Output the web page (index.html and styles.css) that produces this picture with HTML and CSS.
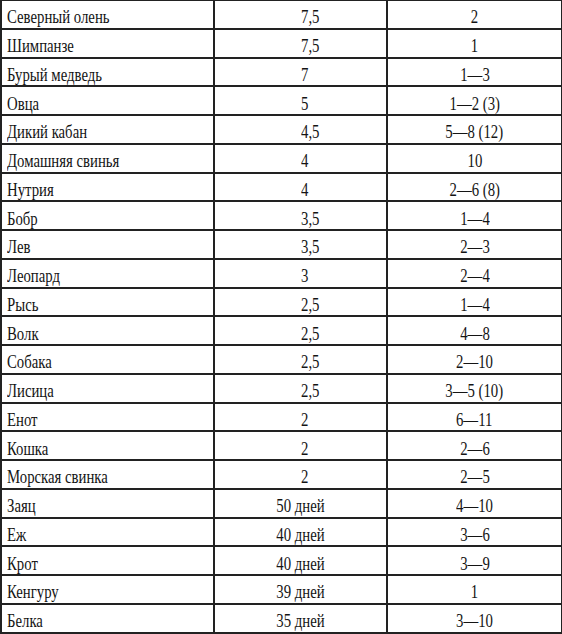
FILE: index.html
```html
<!DOCTYPE html>
<html lang="ru">
<head>
<meta charset="utf-8">
<link rel="stylesheet" href="styles.css">
</head>
<body>
<table class="data">
<colgroup><col class="c1"><col class="c2"><col class="c3"></colgroup>
<tbody>
<tr><td><span>Северный олень</span></td><td class="num"><span>7,5</span></td><td class="ctr"><span>2</span></td></tr>
<tr><td><span>Шимпанзе</span></td><td class="num"><span>7,5</span></td><td class="ctr"><span>1</span></td></tr>
<tr><td><span>Бурый медведь</span></td><td class="num"><span>7</span></td><td class="ctr"><span>1—3</span></td></tr>
<tr><td><span>Овца</span></td><td class="num"><span>5</span></td><td class="ctr"><span>1—2 (3)</span></td></tr>
<tr><td><span>Дикий кабан</span></td><td class="num"><span>4,5</span></td><td class="ctr"><span>5—8 (12)</span></td></tr>
<tr><td><span>Домашняя свинья</span></td><td class="num"><span>4</span></td><td class="ctr"><span>10</span></td></tr>
<tr><td><span>Нутрия</span></td><td class="num"><span>4</span></td><td class="ctr"><span>2—6 (8)</span></td></tr>
<tr><td><span>Бобр</span></td><td class="num"><span>3,5</span></td><td class="ctr"><span>1—4</span></td></tr>
<tr><td><span>Лев</span></td><td class="num"><span>3,5</span></td><td class="ctr"><span>2—3</span></td></tr>
<tr><td><span>Леопард</span></td><td class="num"><span>3</span></td><td class="ctr"><span>2—4</span></td></tr>
<tr><td><span>Рысь</span></td><td class="num"><span>2,5</span></td><td class="ctr"><span>1—4</span></td></tr>
<tr><td><span>Волк</span></td><td class="num"><span>2,5</span></td><td class="ctr"><span>4—8</span></td></tr>
<tr><td><span>Собака</span></td><td class="num"><span>2,5</span></td><td class="ctr"><span>2—10</span></td></tr>
<tr><td><span>Лисица</span></td><td class="num"><span>2,5</span></td><td class="ctr"><span>3—5 (10)</span></td></tr>
<tr><td><span>Енот</span></td><td class="num"><span>2</span></td><td class="ctr"><span>6—11</span></td></tr>
<tr><td><span>Кошка</span></td><td class="num"><span>2</span></td><td class="ctr"><span>2—6</span></td></tr>
<tr><td><span>Морская свинка</span></td><td class="num"><span>2</span></td><td class="ctr"><span>2—5</span></td></tr>
<tr><td><span>Заяц</span></td><td class="ctr"><span>50 дней</span></td><td class="ctr"><span>4—10</span></td></tr>
<tr><td><span>Еж</span></td><td class="ctr"><span>40 дней</span></td><td class="ctr"><span>3—6</span></td></tr>
<tr><td><span>Крот</span></td><td class="ctr"><span>40 дней</span></td><td class="ctr"><span>3—9</span></td></tr>
<tr><td><span>Кенгуру</span></td><td class="ctr"><span>39 дней</span></td><td class="ctr"><span>1</span></td></tr>
<tr><td><span>Белка</span></td><td class="ctr"><span>35 дней</span></td><td class="ctr"><span>3—10</span></td></tr>
</tbody>
</table>
</body>
</html>
```
FILE: styles.css
```css
html, body {
  margin: 0;
  padding: 0;
  background: #fff;
}
.data {
  border-collapse: collapse;
  table-layout: fixed;
  width: 561px;
  margin-top: -1px;
  font-family: "Liberation Serif", "Times New Roman", serif;
  font-size: 18px;
  color: #141414;
}
.c1 { width: 213px; }
.c2 { width: 173px; }
.c3 { width: 175px; }
.data td {
  border: 2px solid #222;
  height: 28.75px;
  box-sizing: border-box;
  padding: 6px 0 0 5px;
  vertical-align: middle;
  white-space: nowrap;
  line-height: 20px;
}
.data td span {
  display: inline-block;
  transform: scaleX(0.82);
  transform-origin: left center;
}
.data td.num {
  padding-left: 86px;
}
.data td.ctr {
  padding-left: 0;
  text-align: center;
}
.data td.ctr span {
  transform-origin: center center;
}
```
